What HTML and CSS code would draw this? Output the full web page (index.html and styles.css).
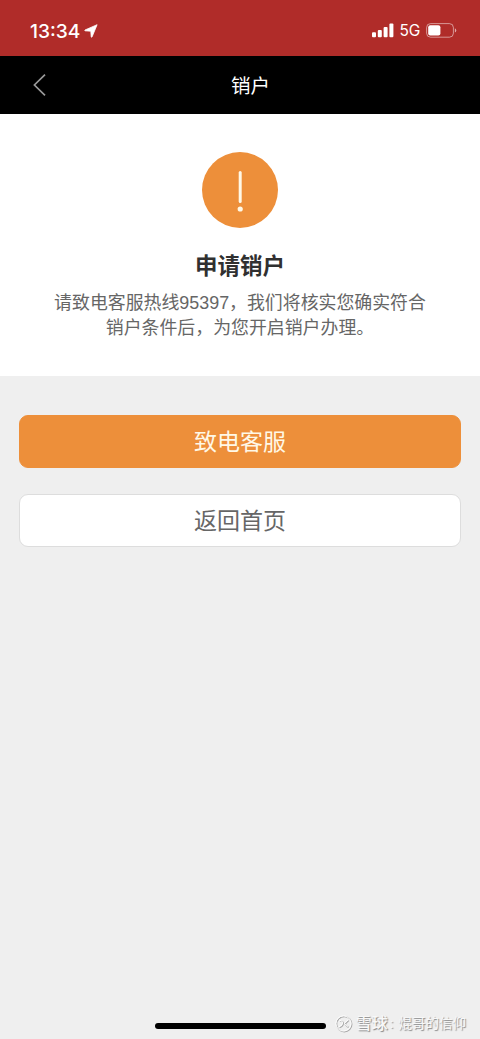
FILE: index.html
```html
<!DOCTYPE html>
<html lang="zh-CN">
<head>
  <meta charset="UTF-8">
  <meta name="viewport" content="width=device-width, initial-scale=1.0">
  <title>销户</title>
  <link rel="stylesheet" href="styles.css">
</head>
<body>
  <div class="status-bar">
    <div class="status-left">
      <span class="time">13:34</span>
      <svg class="location" width="14" height="14" viewBox="0 0 14 14"><path d="M13.1 .7 L8 13 Q7.6 13.5 7.2 12.9 L6.8 7.2 L1 6.8 Q.4 6.5 1 6 Z" fill="#fff" stroke="#fff" stroke-width=".8" stroke-linejoin="round"/></svg>
    </div>
    <div class="status-right">
      <svg width="22" height="15" viewBox="0 0 22 15" fill="#fff">
        <rect x="0" y="9.3" width="4" height="5" rx="1"/>
        <rect x="5.8" y="7" width="4" height="7.3" rx="1"/>
        <rect x="11.6" y="4" width="4" height="10.3" rx="1"/>
        <rect x="17.4" y=".5" width="4" height="13.8" rx="1"/>
      </svg>
      <span class="network">5G</span>
      <svg width="31" height="15" viewBox="0 0 31 15">
        <rect x=".6" y=".6" width="26.8" height="13.6" rx="4" fill="none" stroke="#fff" stroke-opacity=".5" stroke-width="1"/>
        <rect x="2.2" y="2.3" width="12.2" height="10.2" rx="2" fill="#fff"/>
        <path d="M28.9 5.3 Q30.3 6 30.3 7.4 T28.9 9.5 Z" fill="#fff" fill-opacity=".6"/>
      </svg>
    </div>
  </div>

  <header class="nav">
    <a class="back" href="#" aria-label="返回">
      <svg width="14" height="24" viewBox="0 0 14 24"><path d="M13 1.6 L2.4 12 L13 22.4" fill="none" stroke="#999" stroke-width="1.7"/></svg>
    </a>
    <h1>销户</h1>
  </header>

  <section class="notice">
    <svg class="notice-icon" width="76" height="76" viewBox="0 0 76 76">
      <circle cx="38" cy="38" r="38" fill="#ed8f3a"/>
      <path d="M38.2 20.5 V49.5" stroke="#fff8e6" stroke-width="3" stroke-linecap="round"/>
      <circle cx="38.2" cy="57" r="2.6" fill="#fff8e6"/>
    </svg>
    <h2>申请销户</h2>
    <p>请致电客服热线95397，我们将核实您确实符合<br>销户条件后，为您开启销户办理。</p>
  </section>

  <main class="actions">
    <button class="btn btn-primary">致电客服</button>
    <button class="btn btn-default">返回首页</button>
  </main>

  <footer class="bottom">
    <div class="home-indicator"></div>
    <div class="watermark">
      <svg width="18" height="18" viewBox="0 0 18 18" fill="none">
        <g stroke="#a9a9a9" stroke-width="1.2" transform="translate(.8 .8)">
          <circle cx="8.5" cy="8.5" r="7.6"/>
          <path d="M4.2 5 Q8 5.6 7.6 8.2 T3.8 11.8 M13 4.8 L9.4 8.3 Q11 10.8 12.8 11.6"/>
        </g>
        <g stroke="#fff">
          <circle cx="8.5" cy="8.5" r="7.6"/>
          <path d="M4.2 5 Q8 5.6 7.6 8.2 T3.8 11.8 M13 4.8 L9.4 8.3 Q11 10.8 12.8 11.6"/>
        </g>
      </svg>
      <span class="brand">雪球</span><span class="colon">:</span><span class="author">焜哥的信仰</span>
    </div>
  </footer>
</body>
</html>
```
FILE: styles.css
```css
* {
  box-sizing: border-box;
}

body {
  margin: 0;
  height: 1039px;
  display: flex;
  flex-direction: column;
  background: #efefef;
  font-family: "Liberation Sans", "Noto Sans CJK SC", sans-serif;
  overflow: hidden;
}

.status-bar {
  height: 56px;
  padding: 5px 23px 0 30px;
  display: flex;
  align-items: center;
  justify-content: space-between;
  background: #b02c29;
  color: #fff;
}

.status-left,
.status-right {
  display: flex;
  align-items: center;
}

.time {
  font: 500 19.2px/24px Inter, sans-serif;
}

.location {
  margin-left: 4px;
}

.network {
  margin: 0 6px;
  font: 400 15.5px/20px Inter, sans-serif;
  letter-spacing: -0.3px;
}

.nav {
  height: 58px;
  display: grid;
  grid-template-columns: 80px 1fr 59px;
  align-items: center;
  background: #000;
}

.back {
  display: flex;
  padding-left: 32px;
}

.nav h1 {
  margin: 1px 0 0;
  color: #fff;
  font-size: 19.5px;
  font-weight: 400;
  line-height: 28px;
  text-align: center;
}

.notice {
  height: 262px;
  padding-top: 38px;
  display: flex;
  flex-direction: column;
  align-items: center;
  background: #fff;
  text-align: center;
}

.notice h2 {
  margin: 23px 0 0;
  color: #303030;
  font-size: 22.5px;
  font-weight: 700;
  line-height: 32px;
}

.notice p {
  margin: 8px 0 0;
  color: #666;
  font-size: 17.9px;
  line-height: 25px;
  white-space: nowrap;
}

.actions {
  flex: 1;
  padding: 39px 19px 0;
  display: flex;
  flex-direction: column;
  gap: 26px;
}

.btn {
  height: 53px;
  padding: 0;
  border: 1px solid #ddd;
  border-radius: 9px;
  font-family: inherit;
  font-size: 23px;
  line-height: 34px;
}

.btn-primary {
  border-color: #ed8f3a;
  background: #ed8f3a;
  color: #fff8e6;
}

.btn-default {
  background: #fff;
  color: #666;
}

.bottom {
  height: 30px;
  padding: 0 14px 0 155px;
  display: flex;
  align-items: center;
  justify-content: space-between;
}

.home-indicator {
  width: 171px;
  height: 6px;
  margin-top: 3px;
  border-radius: 3px;
  background: #000;
}

.watermark {
  display: flex;
  align-items: center;
  color: #f8f8f8;
  font-size: 13.5px;
  line-height: 20px;
  text-shadow: 1px 1px 1px #888;
}

.brand {
  margin-left: 3px;
  font-size: 16px;
  font-weight: 500;
}

.colon {
  margin: 0 5px 0 2px;
}
```
